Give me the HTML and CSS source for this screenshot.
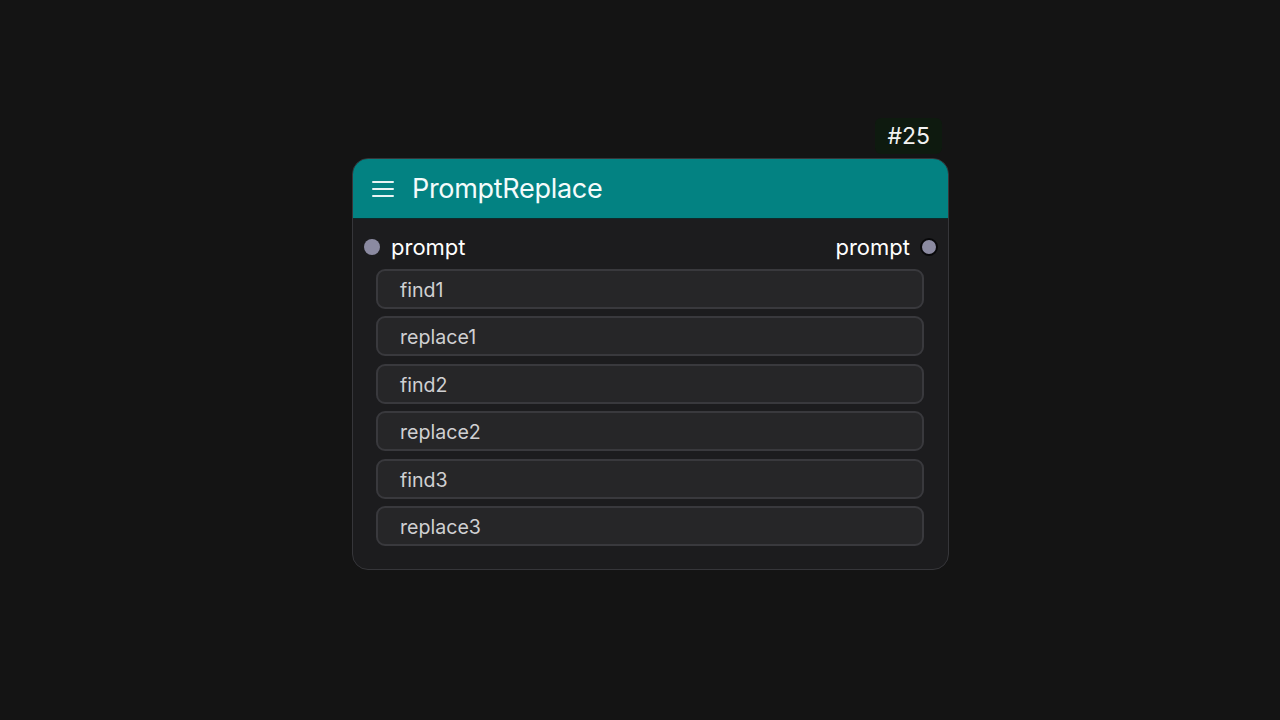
FILE: index.html
```html
<!DOCTYPE html>
<html>
<head>
<meta charset="utf-8">
<link rel="stylesheet" href="styles.css">
</head>
<body>
<div class="canvas">
  <div class="node">
    <div class="badge">#25</div>
    <div class="header">
      <svg class="menu" width="22" height="18" viewBox="0 0 22 18"><path d="M1 2h20M1 9h20M1 16h20" stroke="#e8f4f4" stroke-width="2" stroke-linecap="round"/></svg>
      <span class="title">PromptReplace</span>
    </div>
    <div class="body">
      <div class="slots">
        <div class="slot in"><span class="dot"></span><span>prompt</span></div>
        <div class="slot out"><span>prompt</span><span class="dot ring"></span></div>
      </div>
      <div class="widgets">
        <div class="widget">find1</div>
        <div class="widget">replace1</div>
        <div class="widget">find2</div>
        <div class="widget">replace2</div>
        <div class="widget">find3</div>
        <div class="widget">replace3</div>
      </div>
    </div>
  </div>
</div>
</body>
</html>
```
FILE: styles.css
```css
html, body {
  margin: 0;
  padding: 0;
  background: #141414;
  font-family: Inter, "Liberation Sans", sans-serif;
}
.canvas {
  width: 1280px;
  height: 720px;
  display: flex;
  justify-content: center;
  align-items: flex-start;
  padding-top: 158px;
  box-sizing: border-box;
}
.node {
  position: relative;
  width: 597px;
  margin-left: 21px;
  border: 1px solid #36363a;
  border-radius: 16px;
  background: #1c1c1e;
  box-sizing: border-box;
}
.badge {
  position: absolute;
  right: 6px;
  top: -41px;
  height: 36px;
  padding: 0 12px;
  background: #0e1a0f;
  border-radius: 6px;
  color: #f2f2f2;
  font-size: 23px;
  line-height: 36px;
}
.header {
  height: 59px;
  background: #038282;
  border-radius: 15px 15px 0 0;
  display: flex;
  align-items: center;
  padding-left: 19px;
  gap: 18px;
  border-bottom: 1px solid #0d2a2a;
}
.menu { display: block; }
.title {
  color: #f4fbfb;
  font-size: 27px;
  letter-spacing: -0.3px;
}
.body {
  padding: 16px 11px 23px 11px;
}
.slots {
  display: flex;
  justify-content: space-between;
  align-items: center;
  height: 24px;
  margin-bottom: 10px;
  color: #ffffff;
  font-size: 22px;
}
.slot {
  display: flex;
  align-items: center;
  gap: 11px;
}
.slot.out { gap: 10px; }
.dot {
  width: 16px;
  height: 16px;
  border-radius: 50%;
  background: #8b8aa1;
  margin-top: -1px;
}
.dot.ring {
  width: 14px;
  height: 14px;
  border: 2px solid #08080a;
  margin-right: -1px;
}
.widgets {
  display: flex;
  flex-direction: column;
  gap: 7.4px;
  padding: 0 13px 0 12px;
}
.widget {
  height: 40px;
  box-sizing: border-box;
  border: 2px solid #39393d;
  border-radius: 9px;
  background: #262628;
  color: #d0d0d2;
  font-size: 19.6px;
  display: flex;
  align-items: center;
  padding-left: 22px;
  padding-top: 2px;
}
```
